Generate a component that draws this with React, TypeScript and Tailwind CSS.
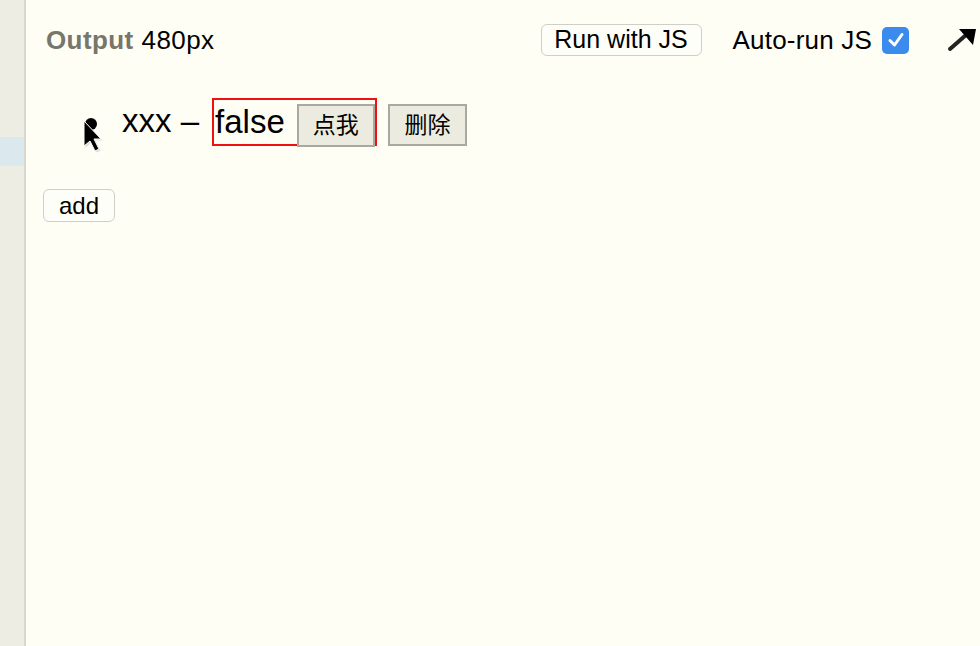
import React from "react";

// Output pane of a playground: header with run controls, then the rendered list.
const FONT = { fontFamily: '"Liberation Sans", "Noto Sans CJK SC", Arial, sans-serif' };

function Cursor() {
  return (
    <svg
      className="pointer-events-none absolute left-[-3px] top-[1px]"
      width="24"
      height="40"
      viewBox="0 0 24 40"
    >
      <path d="M2 2 L2 27 L8 22 L13 32 L17 30 L12 20 L19 20 Z" fill="#c8c8c0" opacity="0.6" transform="translate(1.5,1.5)" />
      <path d="M2 2 L2 27 L8 22 L13 32 L17 30 L12 20 L19 20 Z" fill="#000" stroke="#fff" strokeWidth="1" />
    </svg>
  );
}

function Checkbox() {
  return (
    <span className="flex h-[27px] w-[27px] items-center justify-center rounded-[5px] bg-[#3b8bef]">
      <svg width="20" height="20" viewBox="0 0 20 20">
        <path d="M4 10.5 L8.5 15 L16 4.5" fill="none" stroke="#fff" strokeWidth="3" strokeLinecap="round" strokeLinejoin="round" />
      </svg>
    </span>
  );
}

function PopOut() {
  return (
    <svg width="35" height="26" viewBox="0 0 35 26" className="shrink-0">
      <path d="M5 22 L21 8" stroke="#222" strokeWidth="4" strokeLinecap="round" />
      <path d="M14 2 L31 2 L28 18 Z" fill="#000" />
    </svg>
  );
}

export default function App() {
  return (
    <div className="flex h-[646px] w-[980px] overflow-hidden bg-[#fefef5] text-black" style={FONT}>
      {/* left gutter of the editor */}
      <div className="flex w-[26px] shrink-0 flex-col border-r-2 border-[#d8d8d0] bg-[#eeede4]">
        <div className="h-[137px]" />
        <div className="h-[29px] bg-[#dbe9ef]" />
      </div>

      <div className="flex min-w-0 flex-1 flex-col pl-[20px] pt-[20px]">
        {/* header */}
        <div className="flex h-[40px] items-center">
          <span className="text-[26px] font-bold tracking-[0.4px] text-[#76766a]">Output</span>
          <span className="ml-[8px] text-[26px] tracking-[0.4px]">480px</span>
          <div className="ml-auto flex items-center">
            <button className="flex h-[32px] w-[161px] items-center justify-center rounded-[6px] border border-[#cfcfc6] bg-[#fefef8] text-[25px]">
              Run with JS
            </button>
            <span className="ml-[31px] text-[26px] tracking-[0.2px]">Auto-run JS</span>
            <span className="ml-[10px]">
              <Checkbox />
            </span>
            <span className="ml-[36px]">
              <PopOut />
            </span>
          </div>
        </div>

        {/* list */}
        <ul className="mt-[38px] flex flex-col pl-[39px]">
          <li className="flex h-[49px] items-start">
            <span className="relative mr-[25px] mt-[20px] h-[12px] w-[12px] shrink-0 rounded-full bg-black">
              <Cursor />
            </span>
            <span className="mt-[5px] text-[33px] leading-[36px]">xxx –</span>
            <span className="ml-[13px] flex h-[48px] w-[165px] items-start border-2 border-[#ee1111] pl-[1px]">
              <span className="mt-[4px] text-[33px] leading-[36px]">false</span>
              <button className="ml-[12px] mt-[4px] flex h-[43px] w-[78px] shrink-0 items-center justify-center border-2 border-[#a9a9a2] bg-[#ebebdf] text-[23px]">
                点我
              </button>
            </span>
            <button className="ml-[11px] mt-[6px] flex h-[42px] w-[79px] shrink-0 items-center justify-center border-2 border-[#a9a9a2] bg-[#ebebdf] text-[23px]">
              删除
            </button>
          </li>
        </ul>

        <div className="mt-[42px]">
          <button className="ml-[-3px] flex h-[33px] w-[72px] items-center justify-center rounded-[6px] border border-[#cfcfc6] bg-[#fefef8] text-[24px]">
            add
          </button>
        </div>
      </div>
    </div>
  );
}
